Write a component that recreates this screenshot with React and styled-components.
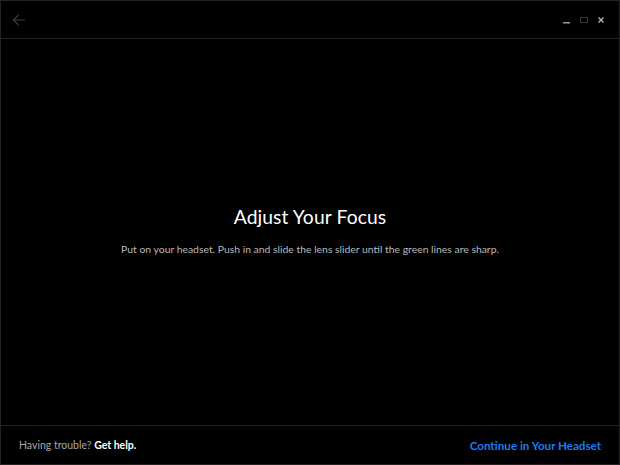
import styled, { createGlobalStyle } from "styled-components";

const Global = createGlobalStyle`
  html, body { margin: 0; padding: 0; background: #000; }
  body { font-family: Lato, "Noto Sans", sans-serif; }
`;

const Frame = styled.div`
  box-sizing: border-box;
  width: 620px;
  height: 465px;
  border: 1px solid #232323;
  background: #000;
  display: flex;
  flex-direction: column;
`;

const TitleBar = styled.div`
  height: 37px;
  flex-shrink: 0;
  border-bottom: 1px solid #232323;
  display: flex;
  align-items: center;
  justify-content: space-between;
  padding: 0 12px 0 11px;
`;

const BackBtn = styled.div`
  display: flex;
  align-items: center;
  margin-top: 1px;
`;

const Controls = styled.div`
  display: flex;
  align-items: center;
  gap: 5px;
  margin-top: 1px;
`;

const Ctl = styled.div`
  width: 12px;
  height: 12px;
  display: flex;
  align-items: center;
  justify-content: center;
`;

const Main = styled.div`
  flex: 1;
  display: flex;
  flex-direction: column;
  align-items: center;
  justify-content: center;
  padding-bottom: 4px;
`;

const Title = styled.h1`
  margin: 0;
  font-family: Lato, sans-serif;
  font-weight: 400;
  font-size: 19.3px;
  color: #fff;
  letter-spacing: 0.1px;
`;

const Sub = styled.p`
  margin: 15px 0 0;
  font-family: Lato, sans-serif;
  font-size: 10.4px;
  color: #b9b9b9;
`;

const Footer = styled.div`
  height: 38px;
  flex-shrink: 0;
  border-top: 1px solid #232323;
  display: flex;
  align-items: center;
  justify-content: space-between;
  padding: 0 18px 0 18px;
  font-family: Lato, sans-serif;
  font-size: 10.5px;
`;

const Help = styled.span`
  color: #a8a8a8;
`;

const HelpLink = styled.span`
  color: #fff;
  font-weight: 700;
`;

const Continue = styled.span`
  color: #1a7cf0;
  font-weight: 700;
  font-size: 11.6px;
`;

export default function App() {
  return (
    <>
      <Global />
      <Frame>
        <TitleBar>
          <BackBtn>
            <svg width="14" height="12" viewBox="0 0 14 12" fill="none" stroke="#3c3c3c" strokeWidth="1.2">
              <path d="M13 6H1.5M6.5 1L1.5 6l5 5" />
            </svg>
          </BackBtn>
          <Controls>
            <Ctl>
              <svg width="10" height="10" viewBox="0 0 10 10">
                <rect x="1" y="7" width="7" height="1.5" fill="#9a9a9a" />
              </svg>
            </Ctl>
            <Ctl>
              <svg width="10" height="10" viewBox="0 0 10 10">
                <rect x="1.5" y="2.5" width="7" height="5" fill="none" stroke="#3a3a3a" strokeWidth="1" />
              </svg>
            </Ctl>
            <Ctl>
              <svg width="10" height="10" viewBox="0 0 10 10" stroke="#b5b5b5" strokeWidth="1.4">
                <path d="M2.5 2.5l5 5M7.5 2.5l-5 5" />
              </svg>
            </Ctl>
          </Controls>
        </TitleBar>
        <Main>
          <Title>Adjust Your Focus</Title>
          <Sub>Put on your headset. Push in and slide the lens slider until the green lines are sharp.</Sub>
        </Main>
        <Footer>
          <span>
            <Help>Having trouble? </Help>
            <HelpLink>Get help.</HelpLink>
          </span>
          <Continue>Continue in Your Headset</Continue>
        </Footer>
      </Frame>
    </>
  );
}
